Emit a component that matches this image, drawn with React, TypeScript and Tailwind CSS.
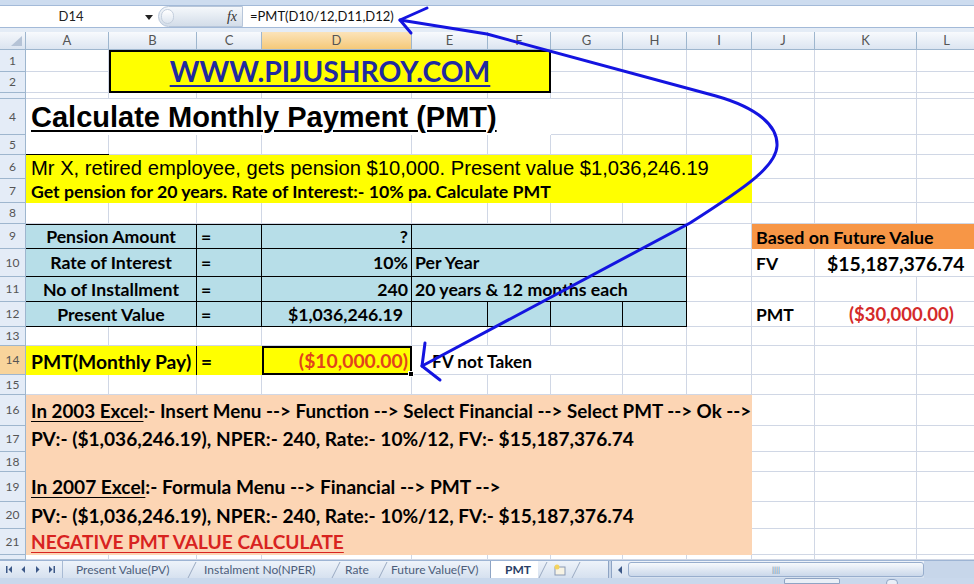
import React from 'react';

const COLS = ['A', 'B', 'C', 'D', 'E', 'F', 'G', 'H', 'I', 'J', 'K', 'L'];
const ROWS = Array.from({ length: 22 }, (_, i) => i + 1);

const GRIDLINE = 'border-r border-b border-[#d0d7e5]';
const BLUE = 'bg-[#b7dee8] border-r border-b border-black flex items-center pt-[2px] font-bold text-[17.7px] whitespace-nowrap';

const tableRows = [
  { row: 'row-start-10', top: 'border-t', label: 'Pension Amount', value: '?', note: '', pr: 'pr-[3px]' },
  { row: 'row-start-11', top: '', label: 'Rate of Interest', value: '10%', note: 'Per Year', pr: 'pr-[3px]' },
  { row: 'row-start-12', top: '', label: 'No of Installment', value: '240', note: '20 years & 12 months each', pr: 'pr-[3px]' },
  { row: 'row-start-13', top: '', label: 'Present Value', value: '$1,036,246.19', note: null, pr: 'pr-[8px]' },
];

function Slash() {
  return (
    <svg width="10" height="18" className="shrink-0">
      <line x1="1" y1="17" x2="9" y2="1" stroke="#9aaac2" strokeWidth="1" />
    </svg>
  );
}

export default function App() {
  return (
    <div className="relative w-[974px] h-[584px] overflow-hidden bg-white font-[Lato,sans-serif] text-black">
      {/* ribbon edge */}
      <div className="h-[6px] bg-[#cddcef] border-b border-[#a3bad8]" />

      {/* formula bar */}
      <div className="flex h-[22px] items-center bg-white border-b border-[#a3bad8]">
        <div className="w-[142px] text-center text-[13px] text-[#222]">D14</div>
        <svg width="14" height="8" className="shrink-0">
          <path d="M3 2 L11 2 L7 7 Z" fill="#222" />
        </svg>
        <div className="ml-[2px] flex h-[21px] w-[85px] items-center rounded-l-full border border-[#b7c6da] bg-linear-to-b from-[#f5f8fb] to-[#d3dde9]">
          <span className="ml-[2px] h-[15px] w-[13px] rounded-full border border-[#c4cfdd] bg-linear-to-b from-white to-[#dde5ef]" />
          <span className="ml-auto mr-[5px] font-['Liberation_Serif',serif] text-[14px] italic text-[#333]">fx</span>
        </div>
        <div className="flex-1 pl-[7px] text-[13px] text-[#111]">=PMT(D10/12,D11,D12)</div>
      </div>
      <div className="h-[4px] bg-[#e4ecf6]" />

      {/* sheet */}
      <div className="grid h-[528px] grid-cols-[26px_83px_88px_65px_150px_76px_63px_72px_64px_65px_63px_102px_60px] grid-rows-[18px_22px_21px_6px_36px_20px_24px_24px_21px_25px_28px_25px_25px_19px_29px_20px_31px_26px_20px_30px_27px_26px_5px]">
        {/* corner */}
        <div className="border-r border-b border-[#9eb6ce] bg-linear-to-b from-[#f4f7fb] to-[#dbe4f0] flex items-end justify-end p-[2px]" style={{ gridRow: 1, gridColumn: 1 }}>
          <svg width="13" height="12">
            <path d="M12 1 L12 11 L1 11 Z" fill="#b5c3d6" />
          </svg>
        </div>
        {COLS.map((c, i) => (
          <div
            key={c}
            className={`flex items-center justify-center border-r border-b border-[#9eb6ce] text-[13px] text-[#555] bg-linear-to-b ${
              c === 'D' ? 'from-[#fbe3b9] to-[#f5c978]' : 'from-[#f8fafd] to-[#dce5f1]'
            }`}
            style={{ gridRow: 1, gridColumn: i + 2 }}
          >
            {c}
          </div>
        ))}
        {ROWS.map((r) => (
          <div
            key={'h' + r}
            className={`flex items-center justify-center overflow-hidden border-r border-b border-[#9eb6ce] text-[12px] text-[#555] ${
              r === 14 ? 'bg-[#f8d49b]' : 'bg-[#e4ecf7]'
            }`}
            style={{ gridRow: r + 1, gridColumn: 1 }}
          >
            {r === 3 || r === 22 ? '' : r}
          </div>
        ))}
        {ROWS.map((r) =>
          COLS.map((c, i) => <div key={c + r} className={GRIDLINE} style={{ gridRow: r + 1, gridColumn: i + 2 }} />)
        )}

        {/* B1:F2 site banner */}
        <div className="col-start-3 col-span-5 row-start-2 row-span-2 flex items-center justify-center border-2 border-black bg-[#ffff00]">
          <span className="text-[28.3px] font-bold text-[#1f2aa0] underline decoration-[2px] underline-offset-[3px]">WWW.PIJUSHROY.COM</span>
        </div>

        {/* A4 title */}
        <div className="col-start-2 col-span-6 row-start-5 flex items-end bg-white pb-[3px] pl-[5px]">
          <span className="font-['Liberation_Sans',Arial,sans-serif] text-[29px] font-bold leading-none underline decoration-[2px] underline-offset-[3px]">
            Calculate Monthly Payment (PMT)
          </span>
        </div>
        <div className="col-start-2 row-start-6 border-b border-black" />

        {/* A6:I7 */}
        <div className="col-start-2 col-span-9 row-start-7 row-span-2 flex flex-col bg-[#ffff00]">
          <div className="flex h-[24px] items-center whitespace-nowrap pl-[5px] pt-[2px] font-['Liberation_Sans',Arial,sans-serif] text-[20.2px]">
            Mr X, retired employee, gets pension $10,000. Present value $1,036,246.19
          </div>
          <div className="flex h-[24px] items-center whitespace-nowrap pl-[5px] pt-[2px] text-[17.7px] font-bold">
            Get pension for 20 years. Rate of Interest:- 10% pa. Calculate PMT
          </div>
        </div>

        {/* A9:H12 table */}
        {tableRows.map((t) => (
          <React.Fragment key={t.label}>
            <div className={`col-start-2 col-span-2 ${t.row} ${t.top} ${BLUE} justify-center`}>{t.label}</div>
            <div className={`col-start-4 ${t.row} ${t.top} ${BLUE} pl-[4px]`}>=</div>
            <div className={`col-start-5 ${t.row} ${t.top} ${BLUE} justify-end ${t.pr}`}>{t.value}</div>
            {t.note !== null ? (
              <div className={`col-start-6 col-span-4 ${t.row} ${t.top} ${BLUE} pl-[3px]`}>{t.note}</div>
            ) : (
              <>
                <div className={`col-start-6 ${t.row} ${BLUE}`} />
                <div className={`col-start-7 ${t.row} ${BLUE}`} />
                <div className={`col-start-8 ${t.row} ${BLUE}`} />
                <div className={`col-start-9 ${t.row} ${BLUE}`} />
              </>
            )}
          </React.Fragment>
        ))}

        {/* row 14 */}
        <div className="col-start-2 col-span-2 row-start-15 flex items-center whitespace-nowrap border-r border-black bg-[#ffff00] pl-[5px] pt-[3px] text-[19.3px] font-bold">
          PMT(Monthly Pay)
        </div>
        <div className="col-start-4 row-start-15 flex items-center bg-[#ffff00] pl-[4px] pt-[3px] text-[19px] font-bold">=</div>
        <div className="relative col-start-5 row-start-15 flex items-center justify-end border-2 border-black bg-[#ffff00] pr-[2px] pt-[2px] text-[19.3px] font-bold text-[#e2431c]">
          ($10,000.00)
          <span className="absolute -bottom-[4px] -right-[4px] h-[6px] w-[6px] border border-white bg-black" />
        </div>
        <div className="col-start-6 col-span-2 row-start-15 flex items-center whitespace-nowrap border-b border-[#d0d7e5] bg-white pl-[20px] pt-[3px] text-[17.3px] font-bold">
          FV not Taken
        </div>

        {/* J9:L12 future value block */}
        <div className="col-start-11 col-span-3 row-start-10 flex items-center whitespace-nowrap bg-[#f79646] pl-[4px] pt-[2px] text-[17.9px] font-bold">
          Based on Future Value
        </div>
        <div className="col-start-11 row-start-11 flex items-center pl-[4px] pt-[2px] text-[17.5px] font-bold">FV</div>
        <div className="col-start-12 col-span-2 row-start-11 flex items-center whitespace-nowrap border-b border-[#d0d7e5] bg-white pl-[12px] pt-[2px] text-[19.4px] font-bold">
          $15,187,376.74
        </div>
        <div className="col-start-11 row-start-13 flex items-center pl-[4px] pt-[2px] text-[17.5px] font-bold">PMT</div>
        <div className="col-start-12 col-span-2 row-start-13 flex items-center whitespace-nowrap border-b border-[#d0d7e5] bg-white pl-[34px] pt-[2px] text-[18.5px] font-bold text-[#d42a2a]">
          ($30,000.00)
        </div>

        {/* A16:I21 notes */}
        <div className="col-start-2 col-span-9 row-start-17 row-span-6 flex flex-col whitespace-nowrap bg-[#fcd5b4] pl-[5px] text-[19.1px] font-bold">
          <div className="flex h-[31px] items-center pt-[1px] text-[18.8px]">
            <span className="underline underline-offset-[3px]">In 2003 Excel</span>
            <span className="whitespace-pre">:- Insert Menu --&gt; Function --&gt; Select Financial --&gt; Select PMT --&gt; Ok --&gt;</span>
          </div>
          <div className="flex h-[26px] items-center pt-[1px]">PV:- ($1,036,246.19), NPER:- 240, Rate:- 10%/12, FV:- $15,187,376.74</div>
          <div className="h-[20px]" />
          <div className="flex h-[30px] items-center pt-[1px]">
            <span className="underline underline-offset-[3px]">In 2007 Excel</span>
            <span className="whitespace-pre">:- Formula Menu --&gt; Financial --&gt; PMT --&gt;</span>
          </div>
          <div className="flex h-[27px] items-center pt-[1px]">PV:- ($1,036,246.19), NPER:- 240, Rate:- 10%/12, FV:- $15,187,376.74</div>
          <div className="flex h-[26px] items-center text-[#d8231f] underline underline-offset-[3px]">NEGATIVE PMT VALUE CALCULATE</div>
        </div>
      </div>

      {/* sheet tabs + scrollbar */}
      <div className="flex h-[18px] items-stretch border-t border-[#9db4d4] bg-linear-to-b from-[#eef3fa] to-[#d6e1ef] text-[12px] text-[#4c5d7a]">
        <div className="flex w-[63px] shrink-0 items-center border-r border-[#a9bbd4]">
          <svg width="62" height="17">
            <rect x="6" y="5" width="1.5" height="7" fill="#3c5887" />
            <path d="M12 5 L8.5 8.5 L12 12 Z" fill="#3c5887" />
            <path d="M25 5 L21.5 8.5 L25 12 Z" fill="#3c5887" />
            <path d="M36 5 L39.5 8.5 L36 12 Z" fill="#3c5887" />
            <path d="M49 5 L52.5 8.5 L49 12 Z" fill="#3c5887" />
            <rect x="53.5" y="5" width="1.5" height="7" fill="#3c5887" />
          </svg>
        </div>
        <div className="flex w-[124px] shrink-0 items-center pl-[13px]">Present Value(PV)</div>
        <Slash />
        <div className="flex w-[134px] shrink-0 items-center pl-[7px]">Instalment No(NPER)</div>
        <Slash />
        <div className="flex w-[37px] shrink-0 items-center pl-[4px]">Rate</div>
        <Slash />
        <div className="flex w-[102px] shrink-0 items-center pl-[3px]">Future Value(FV)</div>
        <div className="flex w-[48px] shrink-0 items-center border-l border-[#8ea4c4] bg-white pl-[14px] font-bold text-[#2a3f66]">PMT</div>
        <Slash />
        <div className="flex w-[23px] shrink-0 items-center justify-center">
          <svg width="14" height="12">
            <rect x="2" y="3" width="10" height="8" fill="#f7f3e4" stroke="#8a9ab5" strokeWidth="1" />
            <circle cx="4" cy="3" r="2.5" fill="#f4d35e" />
          </svg>
        </div>
        <Slash />
        <div className="w-[27px] shrink-0" />
        <div className="w-[4px] shrink-0 border-x border-[#8ea4c4] bg-[#c7d5e8]" />
        <div className="flex w-[16px] shrink-0 items-center justify-center">
          <svg width="8" height="10">
            <path d="M6 1 L2 5 L6 9 Z" fill="#3c5887" />
          </svg>
        </div>
        <div className="my-[1px] flex w-[296px] shrink-0 items-center justify-center rounded-[3px] border border-[#98aecd] bg-linear-to-b from-[#f7f9fc] to-[#cad8ea] text-[8px] text-[#6b7f9e]">
          ||||
        </div>
        <div className="flex-1 bg-[#c7d6ea]" />
      </div>
      <div className="flex h-[6px] items-start bg-[#c9d8ec]">
        <div className="ml-[784px] h-[6px] w-[56px] rounded-t-[2px] border border-[#8ea4c4] bg-[#e9eff7]" />
        <div className="ml-[46px] mt-[1px] h-[8px] w-[12px] rounded-full border border-[#8ea4c4] bg-[#e9eff7]" />
      </div>

      {/* hand-drawn arrow */}
      <svg className="pointer-events-none absolute left-0 top-0" width="974" height="584">
        <path
          d="M400 20 L487 34 L716 96 C758 108 778 126 777 146 C776 166 748 186 690 223 L422 366"
          fill="none"
          stroke="#1414e0"
          strokeWidth="3"
          strokeLinejoin="round"
          strokeLinecap="round"
        />
        <path d="M427 8 L400 20 L411 33" fill="none" stroke="#1414e0" strokeWidth="3" strokeLinecap="round" strokeLinejoin="round" />
        <path d="M425 343 L422 366 L440 380" fill="none" stroke="#1414e0" strokeWidth="3" strokeLinecap="round" strokeLinejoin="round" />
      </svg>
    </div>
  );
}
